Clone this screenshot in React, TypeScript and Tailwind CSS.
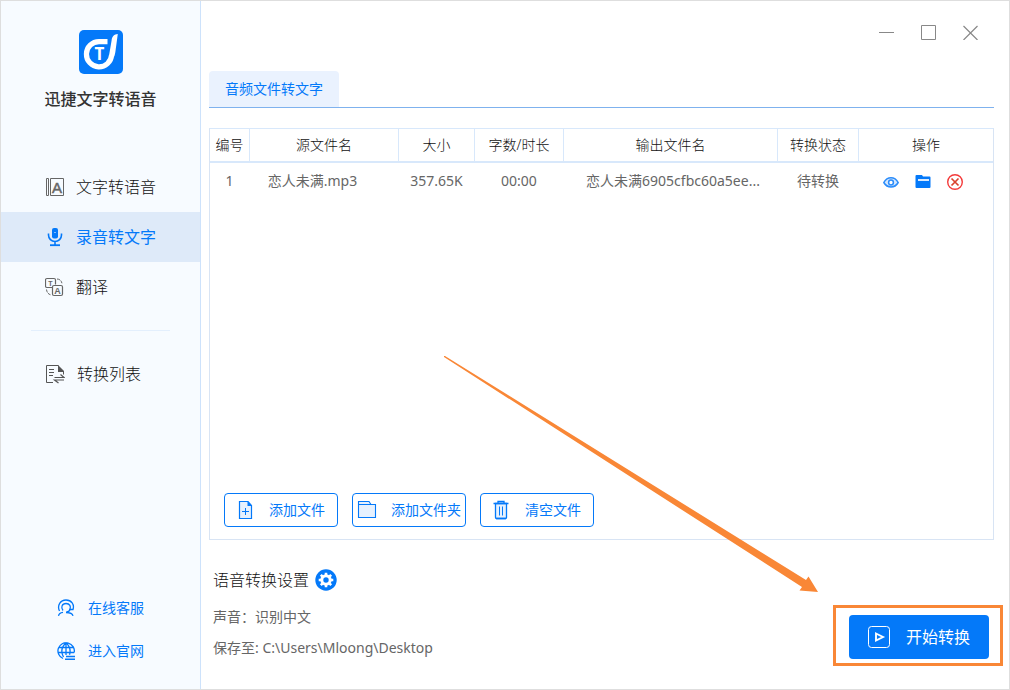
import React from "react";

type IconProps = { className?: string };

function LogoIcon({ className }: IconProps) {
  return (
    <svg className={className} viewBox="0 0 44 44" fill="none" aria-hidden="true">
      <rect width="44" height="44" rx="5" fill="#0479f9" />
      <path d="M28.500 11.600H20A12.600 12.600 0 1 0 32.600 25" stroke="#fff" strokeWidth="5.200" />
      <path d="M38.800 4c-3.600.2-5.800 2.600-6.200 6.400L30.100 25l5.100 1.600c1-2.500 1.200-4.600 1.500-7.100z" fill="#fff" />
      <text x="20.500" y="30" textAnchor="middle" fontSize="17" fontWeight="700" fontFamily="Open Sans, sans-serif" fill="#fff">T</text>
    </svg>
  );
}

function BookIcon({ className }: IconProps) {
  return (
    <svg className={className} viewBox="0 0 20 20" fill="none" stroke="currentColor" aria-hidden="true">
      <path d="M1.500 1.500h2v17h-2zM5.500 1.500h13v17h-13z" />
      <text x="12" y="15.500" textAnchor="middle" fontSize="15" fontWeight="400" fontFamily="Liberation Sans, sans-serif" fill="currentColor" strokeWidth=".5">A</text>
    </svg>
  );
}

function MicIcon({ className }: IconProps) {
  return (
    <svg className={className} viewBox="0 0 20 20" fill="none" stroke="currentColor" aria-hidden="true">
      <rect x="7" y="1" width="6" height="10.500" rx="2" fill="currentColor" stroke="none" />
      <path d="M9.500 5.500h1" stroke="#fff" />
      <path d="M3.500 6.500v1.500a6.500 6.500 0 0 0 13 0V6.500M10 14.500V18" strokeWidth="1.600" />
      <path d="M5 18.200h10" strokeWidth="1.800" />
    </svg>
  );
}

function TranslateIcon({ className }: IconProps) {
  return (
    <svg className={className} viewBox="0 0 20 20" fill="none" stroke="currentColor" aria-hidden="true">
      <path d="M7 10.500H2A1.500 1.500 0 0 1 .5 9V3A1.500 1.500 0 0 1 2 1.500h7A1.500 1.500 0 0 1 10.500 3v4.500" strokeWidth="1.200" />
      <rect x="7.500" y="8.500" width="10" height="10" rx="1.500" strokeWidth="1.200" />
      <path d="M12 2c3 .2 4.500 1.800 5 4.500M1.500 12.500c.4 3.200 2 5 5 5.500" strokeDasharray="3 1" />
      <text x="5.500" y="8.500" textAnchor="middle" fontSize="7" fontWeight="700" fontFamily="Liberation Sans, sans-serif" fill="currentColor" stroke="none">T</text>
      <text x="12.500" y="16.500" textAnchor="middle" fontSize="9" fontWeight="700" fontFamily="Liberation Sans, sans-serif" fill="currentColor" stroke="none">A</text>
    </svg>
  );
}

function ListIcon({ className }: IconProps) {
  return (
    <svg className={className} viewBox="0 0 20 20" fill="none" stroke="currentColor" aria-hidden="true">
      <path d="M8 18.500H1.500v-17h12M18.500 8v2.500M4 5.500h5M4 8.500h5M4 11.500h4" />
      <path d="M13 1l6 6v1h-6z" fill="currentColor" stroke="none" />
      <path d="M9.500 13.500h9.500l-3.500-3M19 16H9.500l4 3" strokeWidth="1.200" />
    </svg>
  );
}

function ServiceIcon({ className }: IconProps) {
  return (
    <svg className={className} viewBox="0 0 18 18" fill="none" stroke="currentColor" strokeWidth="1.300" aria-hidden="true">
      <path d="M2.500 12C-.2 6.500 3.500 1 9 1s8.600 4.500 7 9.500H12" />
      <path d="M6 11.500C3.500 8.500 5 4.500 9 4.500s5 3 4 6c-.5 1.500-2 2.500-3.500 2.500M1.500 16.800c.4-2.300 1.700-3.200 4.500-3.500M9 13.500c4.500.1 6.500 1 7 3.300" />
    </svg>
  );
}

function GlobeIcon({ className }: IconProps) {
  return (
    <svg className={className} viewBox="0 0 18 18" fill="none" stroke="currentColor" strokeWidth="1.300" aria-hidden="true">
      <path d="M6 16.500A8.200 8.200 0 1 1 17.200 10.500M1.500 5.500h15M.8 10.500h16.400M9 1v12M6.500 15C4 10.500 4.500 5 9 .800c4 3.700 4.800 8 3.500 12" />
      <path d="M9 14.500h9M8 17.300h10" strokeWidth="1.400" />
    </svg>
  );
}

function EyeIcon({ className }: IconProps) {
  return (
    <svg className={className} viewBox="0 0 16 16" fill="none" stroke="#2b8cfa" aria-hidden="true">
      <path d="M.8 8.500C4.300 2 11.700 2 15.200 8.500C11.700 14.500 4.300 14.500.8 8.500z" fill="#d5e8fe" strokeWidth="1.500" />
      <circle cx="8" cy="8.500" r="2.400" fill="#fff" strokeWidth="1.500" />
    </svg>
  );
}

function FolderIcon({ className }: IconProps) {
  return (
    <svg className={className} viewBox="0 0 16 16" aria-hidden="true">
      <path d="M.5 2a1 1 0 0 1 1-1H7l1 1.500h6.500a1 1 0 0 1 1 1V13a1 1 0 0 1-1 1h-13a1 1 0 0 1-1-1z" fill="#0479f9" />
      <path d="M3 6h11" stroke="#d9eafe" strokeWidth="2" />
    </svg>
  );
}

function RemoveIcon({ className }: IconProps) {
  return (
    <svg className={className} viewBox="0 0 16 16" fill="none" stroke="#f43a3a" aria-hidden="true">
      <circle cx="8" cy="8" r="7.300" strokeWidth="1.400" />
      <path d="M4.500 4.500l7 7M11.500 4.500l-7 7" stroke="#d9432f" strokeWidth="1.700" />
    </svg>
  );
}

function AddFileIcon({ className }: IconProps) {
  return (
    <svg className={className} viewBox="0 0 20 20" fill="none" stroke="currentColor" aria-hidden="true">
      <path d="M4.500 1.500H13l3.500 4v13h-12z" fill="#e6f1fe" strokeWidth="1.200" />
      <path d="M12.500 1l4.500 5h-4.500z" fill="currentColor" stroke="none" />
      <path d="M7 11.500h7M10.500 8v7" />
    </svg>
  );
}

function AddFolderIcon({ className }: IconProps) {
  return (
    <svg className={className} viewBox="0 0 20 20" fill="none" stroke="currentColor" aria-hidden="true">
      <path d="M1.500 17.500v-16H12l2 3h4.500v13z" fill="#e6f1fe" strokeWidth="1.100" />
      <path d="M1.500 4.500H14" />
    </svg>
  );
}

function TrashIcon({ className }: IconProps) {
  return (
    <svg className={className} viewBox="0 0 20 20" fill="none" stroke="currentColor" aria-hidden="true">
      <path d="M4.500 3.500h11v14a1 1 0 0 1-1 1h-9a1 1 0 0 1-1-1z" fill="#e6f1fe" strokeWidth="1.300" />
      <path d="M2.500 3.500h15M7 3V1.500h6V3M5 18.500h10" strokeWidth="1.300" />
      <path d="M8.500 6.500v9M11.500 6.500v9" />
    </svg>
  );
}

function GearIcon({ className }: IconProps) {
  return (
    <svg className={className} viewBox="0 0 22 22" fill="none" aria-hidden="true">
      <circle cx="11" cy="11" r="10.700" fill="#0479f9" />
      <circle cx="11" cy="11" r="4.200" stroke="#fff" strokeWidth="3" />
      <path d="M11 3.700v3M11 15.300v3M3.700 11h3M15.300 11h3M5.800 5.800l2.100 2.100M14.100 14.100l2.100 2.100M5.800 16.200l2.100-2.100M14.100 7.900l2.100-2.100" stroke="#fff" strokeWidth="2.600" />
    </svg>
  );
}

function PlayIcon({ className }: IconProps) {
  return (
    <svg className={className} viewBox="0 0 22 22" fill="none" stroke="#fff" aria-hidden="true">
      <rect x=".5" y=".5" width="21" height="21" rx="3" />
      <path d="M8 7.500l7 3.500-7 3.500z" strokeWidth="1.900" />
    </svg>
  );
}

const navItems = [
  { label: "文字转语音", Icon: BookIcon, active: false },
  { label: "录音转文字", Icon: MicIcon, active: true },
  { label: "翻译", Icon: TranslateIcon, active: false },
];

const columns = [
  { label: "编号", width: "w-[40px]" },
  { label: "源文件名", width: "w-[149px]" },
  { label: "大小", width: "w-[76px]" },
  { label: "字数/时长", width: "w-[89px]" },
  { label: "输出文件名", width: "" },
  { label: "转换状态", width: "w-[81px]" },
  { label: "操作", width: "w-[134px]" },
];

const files = [
  {
    id: 1,
    name: "恋人未满.mp3",
    size: "357.65K",
    duration: "00:00",
    output: "恋人未满6905cfbc60a5ee...",
    status: "待转换",
  },
];

function Sidebar() {
  return (
    <aside className="flex w-[200px] shrink-0 flex-col border-r border-[#cde2fb] bg-[#f7fbff] pt-[29px] pb-[26px]">
      <div className="flex flex-col items-center gap-[13px]">
        <LogoIcon className="size-11" />
        <h1 className="text-base leading-6 font-medium text-[#333]">迅捷文字转语音</h1>
      </div>

      <nav className="mt-[51px] flex flex-col text-base font-light text-[#111]">
        {navItems.map(({ label, Icon, active }) => (
          <a
            key={label}
            href="#"
            className={
              active
                ? "flex h-[50px] items-center gap-[11px] bg-[#deeaf9] pl-11 font-normal text-[#0479f9]"
                : "flex h-[50px] items-center gap-[11px] pl-11"
            }
          >
            <Icon className={active ? "size-5" : "size-5 text-[#666]"} />
            {label}
          </a>
        ))}
        <hr className="mx-[30px] my-[18px] border-[#e3effd]" />
        <a href="#" className="flex h-[50px] items-center gap-3 pl-11">
          <ListIcon className="size-5 text-[#555]" />
          转换列表
        </a>
      </nav>

      <div className="mt-auto flex flex-col gap-[19px] pl-14 text-sm text-[#0479f9]">
        <a href="#" className="flex h-6 items-center gap-[13px]">
          <ServiceIcon className="size-[18px]" />
          在线客服
        </a>
        <a href="#" className="flex h-6 items-center gap-[13px]">
          <GlobeIcon className="size-[18px]" />
          进入官网
        </a>
      </div>
    </aside>
  );
}

function WindowControls() {
  return (
    <div className="flex h-[70px] justify-end gap-[27px] pt-6 pr-4 text-[#888]">
      <button type="button" aria-label="最小化" className="size-[15px]">
        <svg viewBox="0 0 15 15" className="size-[15px]" stroke="currentColor">
          <path d="M0 7.500h15" />
        </svg>
      </button>
      <button type="button" aria-label="最大化" className="size-[15px]">
        <svg viewBox="0 0 15 15" className="size-[15px]" fill="none" stroke="currentColor">
          <path d="M.5.5h14v14H.5z" />
        </svg>
      </button>
      <button type="button" aria-label="关闭" className="size-[15px]">
        <svg viewBox="0 0 15 15" className="size-[15px]" stroke="currentColor" strokeWidth="1.200">
          <path d="M.5 1l14 14M14.500 1l-14 14" />
        </svg>
      </button>
    </div>
  );
}

function FileTable() {
  return (
    <table className="w-full table-fixed border-separate border-spacing-0 text-center text-sm text-[#666]">
      <thead>
        <tr className="h-[34px] text-[#111]">
          {columns.map(({ label, width }) => (
            <th
              key={label}
              scope="col"
              className={`${width} border-r border-b-2 border-[#d8e8fb] p-0 font-light last:border-r-0`}
            >
              {label}
            </th>
          ))}
        </tr>
      </thead>
      <tbody>
        {files.map((file) => (
          <tr key={file.id} className="h-9">
            <td className="p-0 pr-px">{file.id}</td>
            <td className="p-0 pr-6">{file.name}</td>
            <td className="p-0 pr-px">{file.size}</td>
            <td className="p-0 pr-px">{file.duration}</td>
            <td className="p-0 pl-1 whitespace-nowrap">{file.output}</td>
            <td className="p-0 pr-px">{file.status}</td>
            <td className="p-0">
              <div className="flex items-center justify-center gap-4 pt-[2px] pr-[6px]">
                <button type="button" aria-label="查看">
                  <EyeIcon className="size-4" />
                </button>
                <button type="button" aria-label="打开文件夹">
                  <FolderIcon className="size-4" />
                </button>
                <button type="button" aria-label="删除">
                  <RemoveIcon className="size-4" />
                </button>
              </div>
            </td>
          </tr>
        ))}
      </tbody>
    </table>
  );
}

function Toolbar() {
  return (
    <div className="mt-auto flex gap-[14px] px-[14px] pb-3 text-sm text-[#0479f9]">
      <button type="button" className="flex h-[34px] w-[114px] items-center justify-between rounded border border-current pr-3 pl-[10px]">
        <AddFileIcon className="size-5" />
        添加文件
      </button>
      <button type="button" className="flex h-[34px] w-[114px] items-center justify-between rounded border border-current px-1">
        <AddFolderIcon className="size-5" />
        添加文件夹
      </button>
      <button type="button" className="flex h-[34px] w-[114px] items-center justify-between rounded border border-current pr-3 pl-[10px]">
        <TrashIcon className="size-5" />
        清空文件
      </button>
    </div>
  );
}

function StartButton() {
  return (
    <div className="relative mr-[5px]">
      <button type="button" className="flex h-11 w-[140px] items-center gap-4 rounded bg-[#0479f9] pl-[19px] text-base text-white">
        <PlayIcon className="size-[22px]" />
        开始转换
      </button>
      {/* Guide frame and arrow lie over the window */}
      <div className="pointer-events-none absolute -top-[10px] -right-[14px] -bottom-[7px] -left-4 border-3 border-[#f98736]" />
      <svg
        className="pointer-events-none absolute right-[171px] bottom-[66px] h-[237px] w-[374px]"
        viewBox="0 0 374 237"
        fill="#f98736"
        aria-hidden="true"
      >
        <path d="M0 0L1 0L362 224L364.500 220.500L374 236L355.500 234.500L358 231L0 1Z" />
      </svg>
    </div>
  );
}

export default function App() {
  return (
    <div className="flex min-h-screen border border-[#dedede] bg-white font-['Noto_Sans','Noto_Sans_CJK_SC',sans-serif]">
      <Sidebar />

      <main className="flex min-w-0 flex-1 flex-col pr-[15px] pl-2">
        <WindowControls />

        <div className="flex border-b border-[#7fb2ee]" role="tablist">
          <button type="button" role="tab" aria-selected="true" className="h-9 rounded-t bg-[#eaf2fe] px-4 text-sm text-[#0479f9]">
            音频文件转文字
          </button>
        </div>

        <section className="mt-5 flex flex-1 flex-col border border-[#d8e4f4] border-t-[#d8e8fb]">
          <FileTable />
          <Toolbar />
        </section>

        <footer className="flex items-end justify-between pt-7 pb-[30px]">
          <div className="pl-1 text-sm text-[#666]">
            <div className="flex h-6 items-center gap-[6px]">
              <h2 className="text-base font-light text-[#111]">语音转换设置</h2>
              <button type="button" aria-label="设置">
                <GearIcon className="size-[22px]" />
              </button>
            </div>
            <p className="mt-[15px]">声音：识别中文</p>
            <p className="mt-[11px] pb-px">保存至: C:\Users\Mloong\Desktop</p>
          </div>
          <StartButton />
        </footer>
      </main>
    </div>
  );
}
